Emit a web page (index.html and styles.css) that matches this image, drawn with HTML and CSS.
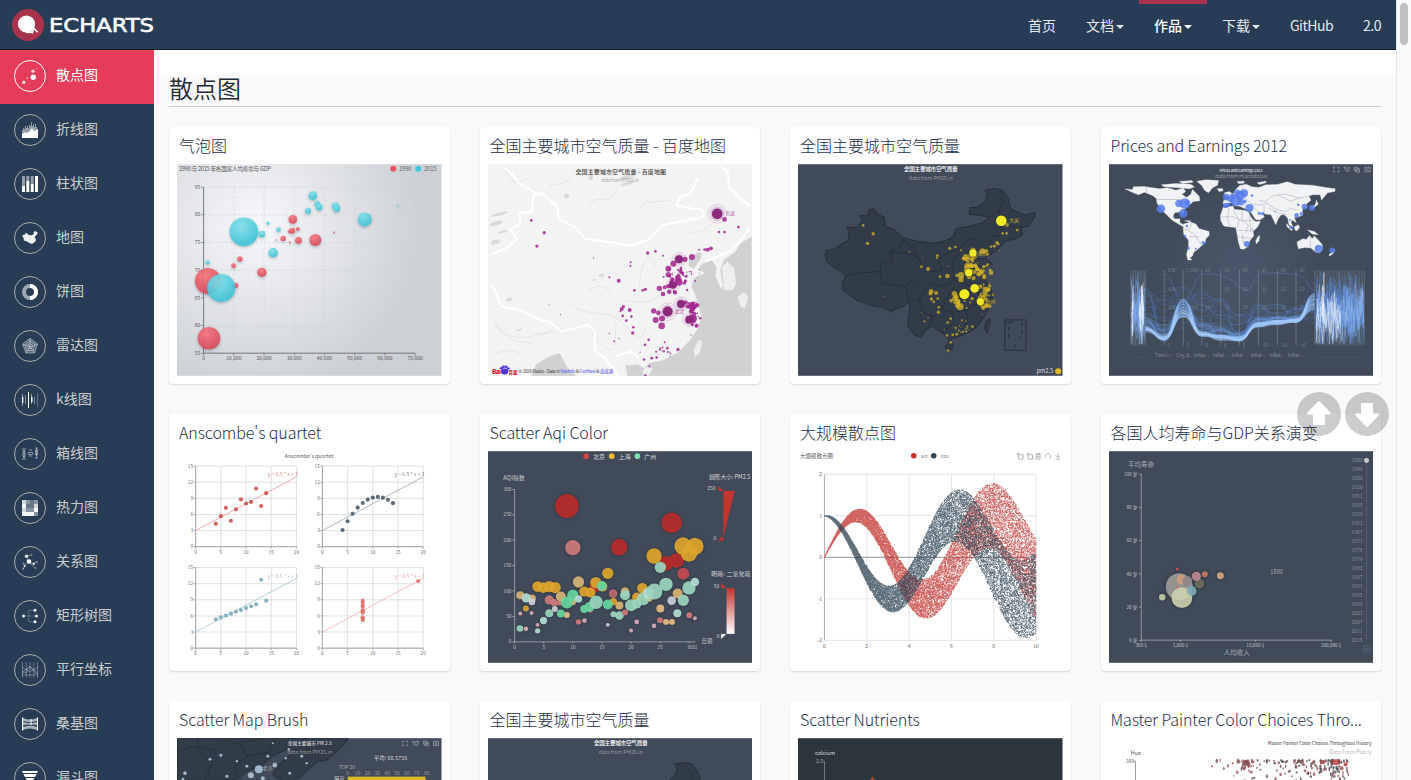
FILE: index.html
```html
<!DOCTYPE html>
<html lang="zh">
<head>
<meta charset="utf-8">
<title>ECharts</title>
<link rel="stylesheet" href="styles.css">
</head>
<body>
<div class="shell">
  <div class="page">
    <header class="topbar">
      <a class="logo">
        <svg width="150" height="36" viewBox="0 0 150 36">
          <circle cx="18" cy="18" r="16" fill="#a9334c"/>
          <circle cx="16.5" cy="17" r="8.6" fill="#fff"/>
          <path d="M20 20l2.500 5 1.200-4 4 4.200" fill="none" stroke="#fff" stroke-width="1.600"/>
          <path d="M16 25.300h6" stroke="#fff" stroke-width="1.600"/>
          <text class="wordmark" x="39" y="25" textLength="105" lengthAdjust="spacingAndGlyphs">ECHARTS</text>
        </svg>
      </a>
      <nav class="nav">
        <a>首页</a>
        <a>文档<i class="caret"></i></a>
        <a class="current">作品<i class="caret"></i></a>
        <a>下载<i class="caret"></i></a>
        <a class="latin">GitHub</a>
        <a class="latin">2.0</a>
      </nav>
    </header>
    <div class="body">
      <aside class="side">
        <a class="item active"><span class="ring"><svg viewBox="0 0 16 16"><circle cx="1.700" cy="14.300" r="1.600"/><circle cx="11.300" cy="9.300" r="2.700"/><circle cx="5.300" cy="10.300" r="1" opacity=".5"/><circle cx="11" cy="3.200" r="1.700" opacity=".75"/><circle cx="15" cy=".8" r=".7" opacity=".5"/></svg></span><span>散点图</span></a>
        <a class="item"><span class="ring"><svg viewBox="0 0 16 16"><path opacity=".5" d="M0 8h1V6h1v1h1V4h1v2h1V4h1v2h1V3h1v1h1V0h1v4h1V2h1v3h1V2h1v3h1v2h1v9H0z"/><path d="M0 12l3-2 1 1 3-1 3-4 1 2 2 1 3-2v9H0z"/></svg></span><span>折线图</span></a>
        <a class="item"><span class="ring"><svg viewBox="0 0 16 16"><path opacity=".5" d="M0 0h3v11H0zM4.300 0h3v5h-3zM8.700 0h3v8h-3z"/><path d="M0 10h3v6H0zM4.300 5h3v11h-3zM8.700 8h3v8h-3zM13 0h3v16h-3z"/></svg></span><span>柱状图</span></a>
        <a class="item"><span class="ring"><svg viewBox="0 0 16 16"><path d="M0 5.500l3-1 1-2 2 2 3 1 3-1.500-.5-2L13.500 1l2.500 2-2 2.500-1.500 2 1.500 1.500-.5 2.500-3.500 2.500-2.500-1-2.500-1.500-3-1L1.500 8z" opacity=".93"/></svg></span><span>地图</span></a>
        <a class="item"><span class="ring"><svg viewBox="0 0 16 16"><circle cx="8" cy="8" r="6" fill="none" stroke="#fff" stroke-width="4" opacity=".55"/><path d="M8 2a6 6 0 0 1 0 12" fill="none" stroke="#fff" stroke-width="4"/></svg></span><span>饼图</span></a>
        <a class="item"><span class="ring"><svg class="line" viewBox="0 0 16 16"><path d="M8 .5l7.500 5.500-3 9h-8.500L.5 6z" fill="#fff" fill-opacity=".3"/><path d="M8 3l5 3.500-2 6H5L3 7zM8 5.500l2.500 2-1 3H6.500l-1-3zM8 .5v8l7.500-2.500M8 8.500l4.500 6.500M8 8.500L4 15M8 8.500L.5 6"/></svg></span><span>雷达图</span></a>
        <a class="item"><span class="ring"><svg viewBox="0 0 16 16"><path d="M.3 2h.5v12H.3zM0 5h1.300v6H0zM6 0h1v16H6zM9.500 2h.5v10h-.5zM9 5h1.500v5H9z"/><path opacity=".4" d="M3 3h1v9H3zM12 5h1v7h-1zM15 1h.7v14H15z"/></svg></span><span>k线图</span></a>
        <a class="item"><span class="ring"><svg class="line" viewBox="0 0 16 16"><path d="M0 3h4M2 3v10M0 13h4M1 5.500h2v5H1zM13 2h3M14.500 2v10M13 12h3M13.500 4h2v5h-2zM7 4h3M6.500 6.500h4v2h-4zM7 10h3"/></svg></span><span>箱线图</span></a>
        <a class="item"><span class="ring"><svg viewBox="0 0 16 16" shape-rendering="crispEdges"><path opacity=".8" d="M0 0h4v4H0zM0 8h4v4H0zM12 4h4v4h-4z"/><path opacity=".45" d="M4 0h4v4H4zM12 0h4v4h-4zM4 8h8v4H4zM12 12h4v4h-4z"/><path opacity=".3" d="M8 0h4v8H8zM4 4h4v4H4z"/><path d="M0 4h4v4H0zM0 12h12v4H0zM12 8h4v4h-4z" opacity=".95"/></svg></span><span>热力图</span></a>
        <a class="item"><span class="ring"><svg viewBox="0 0 16 16"><path d="M4.500 2L7 7.500l4 2.300 4-2M4.500 2l5-1M7 7.500L2.500 12 1 15M7 7.500l5 6M2 9.500l1 3" stroke="#fff" stroke-width=".7" fill="none" opacity=".5"/><circle cx="4.500" cy="2.300" r="1.800" opacity=".8"/><circle cx="7" cy="7.500" r="2.300"/><circle cx="11.800" cy="9.800" r="1.400" opacity=".7"/><circle cx="2.700" cy="12" r="1.100" opacity=".7"/><g opacity=".45"><circle cx="9.700" cy=".9" r=".8"/><circle cx="15" cy="8" r=".9"/><circle cx="1.200" cy="15" r=".9"/><circle cx="13.500" cy="14" r=".9"/><circle cx="1.500" cy="9.500" r=".9"/></g></svg></span><span>关系图</span></a>
        <a class="item"><span class="ring"><svg viewBox="0 0 16 16"><path d="M1 8h14M7 2.300h6M7 13.700h6M6.700 2v12" stroke="#fff" stroke-width=".6" fill="none" opacity=".4"/><circle cx="1.500" cy="8" r="1.500"/><circle cx="13" cy="2.300" r="1.500"/><circle cx="14.500" cy="8" r="1.500"/><circle cx="13" cy="13.700" r="1.500"/></svg></span><span>矩形树图</span></a>
        <a class="item"><span class="ring"><svg class="line faint" viewBox="0 0 16 16"><path d="M.5 0v16M4.300 0v16M8 0v16M11.800 0v16M15.500 0v16M0 5l4 3 4-4 4 4 4-3M0 12l4-5 4 3 4-3 4 5M0 9l4 2 4-6 4 5 4 2M0 13h16"/></svg></span><span>平行坐标</span></a>
        <a class="item"><span class="ring"><svg viewBox="0 0 16 16"><path d="M0 1.500h1.200v13H0zM15 1.500h1v13h-1zM8.500 3h1v6h-1z"/><path opacity=".6" d="M1 2q7 3 14 0v3q-7 2-14 0zM1 6q7 2 14 0v3q-7-1-14 0zM1 11q7-3 14 0v3q-7-3-14 0z"/></svg></span><span>桑基图</span></a>
        <a class="item"><span class="ring"><svg viewBox="0 0 16 16"><path d="M0 1h16l-1 2H1zM1.500 4h13l-1.500 3H3zM3.700 8h8.600l-1.500 3H5.200zM6 12h4l-2 4z"/></svg></span><span>漏斗图</span></a>
      </aside>
      <main class="content">
        <h1>散点图</h1>
        <div class="grid">
          <section class="card"><h2>气泡图</h2><svg class="thumb" id="bubble" viewBox="36 132 795 636"></svg></section>
          <section class="card"><h2>全国主要城市空气质量 - 百度地图</h2><svg class="thumb" id="bmap" viewBox="36 132 795 636"></svg></section>
          <section class="card"><h2>全国主要城市空气质量</h2><svg class="thumb" id="china" viewBox="36 132 795 636"></svg></section>
          <section class="card"><h2 class="latin-title">Prices and Earnings 2012</h2><svg class="thumb" id="prices" viewBox="39 132 795 636"></svg></section>
          <section class="card"><h2 class="latin-title">Anscombe's quartet</h2><svg class="thumb" id="anscombe" viewBox="36 123 795 636"></svg></section>
          <section class="card"><h2 class="latin-title">Scatter Aqi Color</h2><svg class="thumb" id="aqi" viewBox="36 123 795 636"></svg></section>
          <section class="card"><h2>大规模散点图</h2><svg class="thumb" id="large" viewBox="0 0 265 212"></svg></section>
          <section class="card"><h2>各国人均寿命与GDP关系演变</h2><svg class="thumb" id="gdp" viewBox="0 0 265 212"></svg></section>
          <section class="card"><h2 class="latin-title">Scatter Map Brush</h2><svg class="thumb" id="brush" viewBox="0 0 265 212"></svg></section>
          <section class="card"><h2>全国主要城市空气质量</h2><svg class="thumb" id="china2" viewBox="36 132 795 636"></svg></section>
          <section class="card"><h2 class="latin-title">Scatter Nutrients</h2><svg class="thumb" id="nutrients" viewBox="0 0 265 212"></svg></section>
          <section class="card"><h2 class="latin-title">Master Painter Color Choices Thro...</h2><svg class="thumb" id="painter" viewBox="0 0 265 212"></svg></section>
        </div>
      </main>
    </div>
  </div>
  <div class="scrollbar"><div class="grip"></div></div>
</div>
<div class="jump">
  <svg viewBox="0 0 44 44"><circle cx="22" cy="22" r="22" fill="#000" fill-opacity=".2"/><path d="M22 10L33 21.500H27V32H17V21.500H11z" fill="#fff" stroke="#fff" stroke-width="2" stroke-linejoin="round"/></svg>
  <svg viewBox="0 0 44 44"><circle cx="22" cy="22" r="22" fill="#000" fill-opacity=".2"/><path d="M22 34L33 22.500H27V12H17V22.500H11z" fill="#fff" stroke="#fff" stroke-width="2" stroke-linejoin="round"/></svg>
</div>
<script src="charts.js"></script>
</body>
</html>
```
FILE: styles.css
```css
* { box-sizing: border-box; }
body {
  margin: 0;
  height: 780px;
  overflow: hidden;
  background: #fff;
  font-family: "Noto Sans CJK SC", "Noto Sans", sans-serif;
  font-size: 14px;
  color: #293c55;
}
.shell { display: flex; height: 780px; }
.page { flex: 1; min-width: 0; display: flex; flex-direction: column; }
.topbar {
  height: 50px;
  flex: none;
  display: flex;
  justify-content: space-between;
  background: #293c55;
  border-bottom: 1px solid #101c2c;
}
.logo { padding: 7px 0 0 10px; }
.logo svg { display: block; }
.wordmark {
  font-family: "DejaVu Sans", sans-serif;
  font-size: 19px;
  fill: #fff;
  stroke: #fff;
  stroke-width: .6px;
}
.nav { display: flex; }
.nav a {
  height: 49px;
  padding: 11px 15px 0;
  line-height: 20px;
  border-top: 4px solid transparent;
  color: #e6e9ed;
  white-space: nowrap;
}
.nav .latin { letter-spacing: -.5px; }
.nav .current { border-top-color: #a9334c; color: #fff; font-weight: 500; }
.caret {
  display: inline-block;
  margin-left: 2px;
  vertical-align: middle;
  border: 4px solid transparent;
  border-top-color: currentColor;
  border-bottom: 0;
}
.body { flex: 1; min-height: 0; display: flex; }
.side { width: 154px; flex: none; background: #293c55; overflow: hidden; }
.item {
  display: flex;
  align-items: flex-start;
  gap: 10px;
  height: 54px;
  padding: 10px 0 0 14px;
  line-height: 28px;
  color: #ccc;
}
.item.active { background: #e43c59; color: #fff; }
.ring {
  width: 32px;
  height: 32px;
  border: 1px solid #a9aaa9;
  border-radius: 50%;
  display: grid;
  place-items: center;
}
.active .ring { border-color: #fff; }
.ring svg { width: 16px; height: 16px; fill: #fff; overflow: visible; }
.ring .line { fill: none; stroke: #fff; stroke-width: .6px; opacity: .75; }
.ring .faint { stroke-width: .5px; opacity: .6; }
.content {
  flex: 1;
  min-width: 0;
  overflow: hidden;
  margin-top: 25px;
  padding: 0 15px;
  background-color: #fbfbfb;
  background-image: repeating-linear-gradient(0deg, rgba(0,0,0,.008) 0 1px, transparent 1px 2px), repeating-linear-gradient(90deg, rgba(0,0,0,.008) 0 1px, transparent 1px 2px);
}
h1 {
  margin: 0 0 20px;
  height: 32px;
  line-height: 26px;
  font-size: 24px;
  font-weight: 350;
  color: #222b36;
  border-bottom: 1px solid #ccc;
}
.grid { display: grid; grid-template-columns: repeat(4, minmax(0, 1fr)); gap: 30px; }
.card {
  height: 257px;
  padding: 7px 8px 8px;
  background: #fff;
  border-radius: 4px;
  box-shadow: 0 1px 2px rgba(0,0,0,.14);
}
h2 {
  margin: 0 0 6px;
  padding: 0 2px;
  height: 24px;
  line-height: 22px;
  font-size: 16px;
  font-weight: 300;
  color: #1d2f48;
  white-space: nowrap;
}
.latin-title { letter-spacing: -.09px; }
.thumb { display: block; width: 100%; height: 212px; }
.scrollbar { width: 15px; background: #fafafa; border-left: 1px solid #e7e7e7; padding: 3px 0 0 3px; }
.grip { width: 8px; height: 42px; border-radius: 4px; background: #c1c1c1; }
.jump { position: fixed; left: 1297px; top: 392px; display: flex; gap: 4px; }
.jump svg { width: 44px; height: 44px; display: block; }
```
FILE: charts.js
```js
let seed = 7;
const rnd = () => (seed = (seed * 16807) % 2147483647) / 2147483647;
const gauss = () => rnd() + rnd() + rnd() - 1.5;
const put = (id, s) => { document.getElementById(id).innerHTML = s; };
const rect = (x, y, w, h, f, extra = '') => `<rect x="${x}" y="${y}" width="${w}" height="${h}" fill="${f}" ${extra}/>`;
const dot = (x, y, r, f, o = 1) => `<circle cx="${x}" cy="${y}" r="${r}" fill="${f}" fill-opacity="${o}"/>`;
const path = (d, stroke, w = 1, fill = 'none', extra = '') => `<path d="${d}" stroke="${stroke}" stroke-width="${w}" fill="${fill}" stroke-linejoin="round" ${extra}/>`;
const text = (x, y, s, size, f, a = 'middle', extra = '') => `<text x="${x}" y="${y}" font-size="${size}" fill="${f}" text-anchor="${a}" ${extra}>${s}</text>`;
const poly = p => 'M' + p + 'z';

/* bubble chart: life expectancy against GDP */
{
  let s = `<defs><radialGradient id="bg1" gradientUnits="userSpaceOnUse" cx="275" cy="320" r="500"><stop offset="0" stop-color="#f7f8fa"/><stop offset="1" stop-color="#cdd0d5"/></radialGradient>
  <radialGradient id="rd" cx=".4" cy=".3" r="1"><stop offset="0" stop-color="#fb767b"/><stop offset="1" stop-color="#cc2e48"/></radialGradient>
  <radialGradient id="bl" cx=".4" cy=".3" r="1"><stop offset="0" stop-color="#81e3ee"/><stop offset="1" stop-color="#19b7cf"/></radialGradient>
  <filter id="sh" x="-30%" y="-30%" width="160%" height="170%"><feDropShadow dx="0" dy="4" stdDeviation="4" flood-color="#356" flood-opacity=".45"/></filter></defs>`;
  s += rect(36, 132, 795, 636, 'url(#bg1)');
  for (let i = 0; i < 8; i++) {
    const x = 116 + i * 90.8;
    if (i) s += path(`M${x} 201V700`, '#cfd1d5', 2, 'none', 'stroke-dasharray="7 6"');
    s += path(`M${x} 700v7`, '#667', 2) + text(x, 722, i ? i + '0,000' : '0', 15, '#555');
  }
  [85, 80, 75, 70, 65, 60, 55].forEach((v, i) => {
    const y = 201 + i * 83.2;
    s += path(`M116 ${y}H752`, '#cfd1d5', 2, 'none', 'stroke-dasharray="7 6"') + path(`M108 ${y}h8`, '#667', 2) + text(106, y + 5, v, 15, '#555', 'end');
  });
  s += path('M116 201V700H752', '#60646a', 2.5);
  s += text(42, 152, '1990 与 2015 年各国家人均寿命与 GDP', 17, '#555', 'start', 'textLength="276"');
  s += dot(686, 146, 9, '#e8515f') + text(722, 152, '1990', 17, '#666') + dot(761, 146, 9, '#45c8dc') + text(797, 152, '2015', 17, '#666');
  const red = [[129,483,39],[132,655,34],[206,437,7],[225,417,8],[212,496,8],[291,457,14],[384,298,13],[382,332,9],[399,327,6],[355,355,8],[401,361,10],[452,360,18],[334,360,2.5],[375,367,3],[508,337,3],[374,334,5]];
  const blue = [[237,335,43],[169,504,42],[291,342,10],[341,328,7],[309,309,5],[325,398,14],[128,427,6],[444,226,13],[430,272,9],[457,250,8],[463,261,10],[512,257,10],[516,265,10],[600,298,21],[700,257,3]];
  const g = (a, f) => `<g filter="url(#sh)">` + a.map(d => dot(...d, `url(#${f})`, .85)).join('') + '</g>';
  put('bubble', s + g(red, 'rd') + g(blue, 'bl'));
}

const chinaShape = poly('117 405 120 392 150 385 165 372 187 362 190 340 183 322 215 322 228 300 222 285 245 288 250 268 265 266 275 282 296 292 298 318 325 328 350 352 385 362 440 370 470 365 500 352 512 325 545 320 590 308 610 292 585 286 550 283 552 262 575 262 598 245 605 222 598 210 628 205 650 210 668 235 675 265 700 278 720 285 750 277 745 295 730 318 708 322 710 345 690 357 660 362 640 385 620 400 600 410 598 402 612 390 590 385 565 400 560 412 580 415 600 415 622 432 600 442 590 460 600 480 618 510 620 540 612 560 595 590 580 615 555 635 520 650 500 655 492 668 484 652 470 640 440 620 425 625 405 652 385 645 365 615 370 580 372 545 350 560 315 575 290 562 255 557 210 540 170 510 168 490 180 470 165 455 140 440 122 425');
const provinces = 'M175 467L230 458 285 455 284 430 318 422 312 398 345 380 352 352M284 455L288 490 330 495 362 500 375 480 395 495M312 398L360 398 395 410 380 382 352 360M395 410L410 440 440 455 470 450 458 420 480 400 520 388 540 362 570 355 590 372M362 500L368 545 400 535 420 505 440 490 470 500 505 480 500 430 520 395M400 535L410 575 440 590 470 570 480 540 505 500M440 590L430 622M470 570L500 575 505 605 470 640M500 575L540 572 575 550 600 545M540 572L548 600 520 640M575 550L580 520 560 500 530 490 505 480M530 490L540 455 560 440 598 442M540 455L535 410 550 395M610 292L640 270 655 245 635 220M640 270L650 310 690 320 708 322M645 310L650 345 620 350 610 375';
const coords = [[232,316,4],[262,341,5],[245,370,5],[371,396,2],[407,440,4],[427,447,6],[412,412,1.5],[455,407,4],[453,414,3],[492,385,5],[509,381,4],[526,391,3],[463,470,4],[485,468,7],[488,439,2],[436,514,7],[434,521,6],[451,519,6],[437,537,5],[444,546,4],[456,536,4],[459,562,4],[458,577,5],[416,604,3],[427,594,2],[407,578,1.5],[297,530,1.5],[495,596,4],[486,608,4],[475,629,2],[484,647,4],[495,668,4],[487,692,4],[501,645,4],[513,643,4],[529,601,3],[560,620,4],[589,584,2],[541,604,2],[651,340,4],[663,340,4],[695,330,4],[664,314,6],[634,368,5],[626,378,5],[616,380,4],[603,392,5],[591,394,9],[605,402,5],[559,536,5],[553,548,3],[543,564,3],[638,372,4],[641,391,2],[523,560,11],[515,545,9],[506,521,8],[526,466,10],[514,466,5],[526,479,8]];
const spread = (cx, cy, sx, sy, n, r) => Array.from({ length: n }, () => [cx + gauss() * sx, cy + gauss() * sy, r * (.4 + rnd())]);
const clusters = [...spread(550, 425, 16, 40, 22, 6), ...spread(575, 448, 34, 26, 32, 5), ...spread(597, 508, 24, 18, 20, 5), ...spread(594, 543, 18, 20, 14, 6), ...spread(518, 538, 18, 18, 10, 6), ...spread(528, 627, 24, 12, 18, 2.5)];

/* national air quality, dark map */
function chinaMap() {
  let s = rect(36, 132, 795, 636, '#404a59') + path(chinaShape, '#222c34', 2.5, '#323c48') + path(provinces, '#222c34', 2.2);
  s += path('M596 625l6-22 12-7-3 22-7 23z', '#222c34', 2, '#323c48') + path('M478 680l10-13 14 5-2 16-14 8z', '#222c34', 2, '#323c48');
  s += path('M658 600h63v91h-63z', '#222c34', 2.5) + path('M658 610l20-3 8-7M670 620v12M670 642v14M710 608v12M709 630v12M703 650l-3 8M685 680l8-6', '#222c34', 3);
  s += text(435, 151, '全国主要城市空气质量', 17, '#fff', 'middle', 'textLength="162" font-weight="500"') + text(435, 179, 'data from PM25.in', 16, '#999', 'middle', 'textLength="132"');
  return s;
}
{
  let s = chinaMap();
  coords.concat(clusters).forEach(([x, y, r]) => { s += dot(x, y, r, '#ddb926', .72); });
  s += text(670, 306, '大庆', 15, '#ddb926', 'start') + text(575, 404, '北京', 15, '#ddb926', 'start') + text(600, 549, '杭州', 15, '#ddb926', 'start');
  s += `<g style="filter:drop-shadow(0 0 4px #333)">` + [[647,302,16],[562,399,11],[549,458,11],[567,505,13],[536,523,15],[584,545,11]].map(d => dot(...d, '#f4e925')).join('') + '</g>';
  s += text(778, 760, 'pm2.5', 17, '#ddd') + dot(818, 754, 9, '#ddb926');
  put('china', s);
  put('china2', chinaMap());
}

/* the same cities on a light base map */
{
  const big = [[725,281,16],[610,418,12],[592,495,11],[616,552,12],[576,575,15],[640,600,11]];
  let s = rect(36, 132, 795, 636, '#f3f3f3');
  s += path(poly('828 350 795 370 780 395 745 420 735 450 742 500 735 505 720 470 722 440 705 418 680 432 668 450 690 458 655 475 648 498 665 540 678 590 668 625 640 665 605 700 560 722 520 730 505 745 485 735 450 738 455 768 828 768'), '#d1d1d1', 1, '#d1d1d1');
  s += path(poly('168 768 180 735 210 715 250 700 262 720 275 745 300 768'), '#d1d1d1', 1, '#d1d1d1');
  s += path(poly('655 445 640 440 640 420 665 398 680 400 672 420'), '#d1d1d1', 1, '#d1d1d1');
  s += path(poly('740 440 755 425 775 445 782 490 772 510 745 510'), '#eee', 1, '#eee') + path(poly('787 530 805 518 818 530 808 565 795 560'), '#eee', 1, '#eee') + path(poly('655 690 670 660 680 665 672 700 658 712'), '#eee', 1, '#eee') + path(poly('500 755 510 742 530 745 522 765 505 768'), '#eee', 1, '#eee');
  const blotches = [[70,282,26,4],[60,310,22,6],[58,366,14,7],[80,335,15,4],[272,228,8,7],[345,170,7,10],[455,170,25,6],[455,190,22,5],[377,467,8,5],[100,538,10,5],[220,555,5,3],[355,480,5,3],[130,630,10,3]];
  blotches.forEach(([x, y, a, b]) => { s += `<ellipse cx="${x}" cy="${y}" rx="${a}" ry="${b}" fill="#d8d9da" transform="rotate(-15 ${x} ${y})"/>`; });
  s += path('M92 135q-5 30 15 45t60-15M336 249q25-15 50-12t35-25 45-15M492 270q8-25 35-25t60-5M335 510q50-25 70 10M490 500q5-60 20-80t30 20M450 540q60 20 100-10t80 15M280 550q40 30 90 30t90 50 50-10M50 590q10 50 60 60t120-20M60 610q30 60 110 60M350 640q30 50 60 50M60 700q50-20 90 10M640 340q50 0 80-40t70-20M290 165q-20 30-70 30M180 640q60 5 90-20M420 610v70', '#e0e2e3', 2.5);
  s += path('M47 403q50-20 57-30l20-15-20-30 28-16v-35h35l5-50 26-8 45 38 5 40 50 25 30 35 80 10 50 10 55-15 45-45 20-5 75-15q45-5 25-30h-20l-55-12 10-25 30-10 25-45M736 140q30 10 22 60l30 30 35 28M80 140q20 10 50 50l65 37M820 320q-15 40-60 75-50 20-70 30M47 490l30 70 55 10q50 30 85 35l40 30 80-20 20 20v60l25 15 35 40 10 25M420 710l45-15 25 20', '#fff', 6);
  const spots = [[166,301,4],[205,338,5],[183,378,5],[353,414,2],[401,472,3],[429,482,6],[465,427,3],[464,438,3],[516,399,5],[539,394,4],[562,407,3],[476,511,4],[509,508,5],[501,511,4],[443,560,5],[438,567,6],[462,570,6],[434,574,3],[441,588,4],[452,602,4],[467,590,4],[473,622,4],[471,639,5],[415,664,3],[430,656,2],[401,640,2],[254,584,2],[519,660,4],[508,675,4],[493,697,2],[505,719,4],[521,739,3],[509,767,4],[528,715,4],[543,713,4],[567,667,3],[575,685,4],[607,689,5],[646,645,2],[730,336,4],[747,336,4],[789,321,4],[747,298,7],[706,385,6],[696,389,6],[687,389,4],[671,389,3],[649,411,9],[628,418,8],[558,618,10],[540,600,9],[534,573,8],[548,579,7],[559,596,9],[551,505,8],[562,522,7],[567,502,6],[593,431,9],[578,446,9],[578,464,8],[655,595,9],[655,582,7],[663,617,6]];
  spots.concat(spread(605, 478, 32, 32, 40, 5), spread(648, 560, 22, 16, 22, 5), spread(652, 600, 18, 18, 12, 5), spread(568, 695, 28, 12, 16, 2.5), spread(650, 465, 30, 14, 10, 2.5)).forEach(([x, y, r]) => { s += dot(x, y, r, '#a2258f', .85); });
  big.forEach(([x, y, r]) => { s += dot(x, y, r * 1.4, '#800080', .18) + `<circle cx="${x}" cy="${y}" r="${r * 1.75}" fill="none" stroke="#a03a93" stroke-opacity=".35" stroke-width="2"/>` + dot(x, y, r, '#8b2a7c'); });
  s += text(750, 286, '大庆', 14, '#b040a0', 'start') + text(598, 580, '武汉', 14, '#b040a0', 'start');
  s += text(435, 162, '全国主要城市空气质量 - 百度地图', 18, '#444', 'middle', 'textLength="272" font-weight="500"') + text(433, 187, 'data from PM25.in', 15, '#aaa', 'middle', 'textLength="112"');
  s += text(48, 763, 'Bai', 19, '#e2202d', 'start', 'font-weight="900" textLength="27"') + text(98, 763, '百度', 13, '#e2202d', 'start', 'font-weight="900"');
  s += `<ellipse cx="86" cy="755" rx="11" ry="9" fill="#4b35df"/>` + dot(77, 745, 4, '#4b35df') + dot(83, 741, 4, '#4b35df') + dot(91, 741, 4, '#4b35df') + dot(97, 746, 4, '#4b35df');
  s += `<text x="128" y="761" font-size="14" fill="#444" textLength="284">© 2016 Baidu - Data © <tspan fill="#55e">NavInfo</tspan> &amp; <tspan fill="#55e">CenNavi</tspan> &amp; <tspan fill="#55e">道道通</tspan></text>`;
  put('bmap', s);
}

/* world map over parallel axes */
{
  let s = `<defs><radialGradient id="bg4" gradientUnits="userSpaceOnUse" cx="435" cy="450" r="260"><stop offset="0" stop-color="#4b5769"/><stop offset="1" stop-color="#404a59"/></radialGradient></defs>` + rect(39, 132, 795, 636, 'url(#bg4)');
  const land = [
    '87 206 110 209 112 200 145 199 190 206 215 203 240 210 262 204 270 214 258 222 272 232 285 222 290 208 310 228 312 242 292 244 284 252 272 262 262 270 262 284 254 276 238 277 232 286 236 297 252 296 252 308 268 316 262 320 228 300 210 282 200 272 192 262 183 248 182 236 170 226 145 216 128 224 112 218',
    '264 312 284 306 300 312 310 326 340 334 340 346 330 356 328 368 316 378 306 388 294 396 290 408 282 414 288 420 276 420 272 404 278 380 278 360 264 345 262 328',
    '303 183 330 179 368 181 365 195 350 203 338 218 326 210 318 196',
    '382 262 412 258 416 268 440 270 458 274 466 292 478 304 494 304 486 320 472 334 474 348 462 362 456 380 444 388 434 386 428 366 424 342 420 322 398 320 384 318 375 302 374 286',
    '382 250 384 240 398 236 394 226 388 228 386 218 400 214 412 222 420 208 432 196 452 192 468 200 490 202 510 194 545 193 575 185 600 193 650 195 690 202 719 206 718 214 696 218 684 232 678 240 674 224 650 224 640 228 646 240 632 252 634 264 624 262 620 272 622 284 610 290 596 292 602 308 590 300 586 306 592 322 580 314 576 294 566 284 556 284 548 296 540 314 534 300 526 284 510 282 500 278 506 290 492 300 480 298 468 280 460 270 444 264 430 258 416 256 412 246 396 250 390 258',
    '604 366 622 356 632 358 642 346 650 356 656 348 668 360 680 374 680 390 672 398 660 396 646 384 628 382 608 386',
    '486 350 492 346 490 362 482 372 480 362', '572 310 590 328 588 332 574 320', '596 320 608 314 612 322 604 332 598 330', '636 330 656 334 668 344 650 342', '700 404 718 390 714 400 702 408', '662 240 668 252 656 262 648 264 660 252',
    '196 194 240 190 284 192 296 200 282 206 240 202 205 200', '250 184 288 181 292 186 260 190', '364 206 380 205 382 212 370 214', '424 184 446 183 444 189 428 190', '484 188 510 183 512 187 492 193', '266 302 284 302 282 306'];
  land.forEach(p => { s += path(poly(p), '#f1f2f3', 1, '#f1f2f3'); });
  s += path('M183 238H258M150 201l5 20M400 262l-5 35 8 22M412 270l18 30-5 22M440 270l-2 30 20 15-8 25M378 290h35l25 12 40-2M424 330l50 3M428 350l40 5M440 340l3 30M460 275l5 60M275 330l20 12 20 30M280 350l30 0M262 330l20-5 5-16M440 200l5 30 20 20 20 5 30-5 20 15 30 10 20-10 20 5M490 240l20 5 20-18 40-5 40 12 40-8M548 225l35 18 30-10M470 255l20 25M505 255v25M420 225l30 15-6 20M520 265l25 12 30 8M644 347v38', '#7c838d', 1);
  [[195,266,13],[249,250,11],[267,250,16],[275,248,8],[262,280,13],[234,291,3],[273,318,4],[267,348,4],[278,385,4],[300,386,3],[322,368,5],[329,367,3],[391,231,10],[390,256,8],[398,254,6],[419,240,17],[424,217,9],[445,219,12],[434,226,14],[404,236,10],[435,246,10],[410,228,8],[448,244,5],[461,264,12],[469,226,4],[491,280,5],[501,281,5],[538,275,2],[453,372,9],[586,322,5],[603,286,7],[617,281,5],[627,260,9],[649,263,9],[608,254,4],[669,386,12],[710,391,9],[583,300,3],[471,327,2]].forEach(d => { s += dot(...d, '#577ceb', .85); });
  s += text(436, 154, 'Prices and Earnings 2012', 11, '#eee', 'middle', 'textLength="130" lengthAdjust="spacingAndGlyphs" font-weight="500"') + text(436, 174, 'data from macrofocus', 16, '#999', 'middle', 'textLength="158"');
  const tools = (x, y) => path(`M${x} ${y}h5m6 0h5v5m0 4v5h-5m-6 0h-5v-5m0-4v-5M${x + 31} ${y}h6l3 5 4-5h4l-3 12h-6zM${x + 62} ${y}h11v10h-11zM${x + 67} ${y + 5}h11v10h-11zM${x + 94} ${y}h16v14h-16zm4 3l8 8m0-8l-8 8`, '#b3b8bf', 1.8);
  s += tools(714, 141);
  const ax = [148, 205, 262, 318, 375, 431, 488, 545, 601, 657];
  ax.slice(1, 9).forEach((x, i) => {
    s += path(`M${x} 450V677`, '#8b929c', 2, 'none', 'opacity=".8"');
    const v = [[500, 400, 300, 0], ['1,500', '', '1,000', 0], [15, '', 10, 0], [20, 15, 10, 0], [40, 30, 20, 0], [60, 20, 10, -10], [60, 20, 10, -10], [30, 20, 10, -10]][i];
    [456, 512, 568, 682].forEach((y, k) => { s += text(x + 10, y, v[k], 14, '#8a909a', 'start', 'opacity=".7"'); });
    s += text(x, 712, i ? (i == 1 ? 'City, b.' : 'Inflat…') : 'Time r…', 14, '#8a909a');
  });
  s += path('M103 712H150M657 712H808', '#59636f', 1);
  let lines = '';
  const curve = ys => {
    let d = `M${ax[0]} ${ys[0]}`;
    for (let j = 1; j < ax.length; j++) {
      const m = (ax[j] + ax[j - 1]) / 2;
      d += `C${m} ${ys[j - 1]} ${m} ${ys[j]} ${ax[j]} ${ys[j]}`;
    }
    return d;
  };
  const mean = [632, 659, 565, 648, 655, 659, 615, 608, 603, 545];
  const reach = [140, 150, 75, 150, 140, 80, 70, 60, 45, 75];
  /* kind: loose outliers, ordinary cities, and the bright core where most cities meet */
  const bundle = (n, scale, jitter, col, o) => {
    for (let i = 0; i < n; i++) {
      const ys = mean.map((m, j) => {
        const off = j == 2 || j == 9 ? (rnd() - .5) * reach[j] * 1.8 * Math.max(scale, .4) : -rnd() * reach[j] * scale + (rnd() - .4) * jitter;
        return Math.min(674, Math.max(458, m + off)).toFixed(0);
      });
      lines += path(curve(ys), col, 1.7, 'none', `opacity="${o}"`);
    }
  };
  bundle(18, 1, 10, '#5d8de8', .3);
  bundle(36, .3, 16, '#6fa4f5', .3);
  bundle(34, .07, 12, '#a9d0ff', .45);
  lines += path('M205 462C230 462 240 545 262 545S300 462 318 462C350 462 390 460 431 500S470 460 500 460C560 456 570 462 601 463S640 510 657 512', '#6793dd', 2, 'none', 'opacity=".5"');
  for (let x = 104; x < 150; x += 5) lines += path(`M${x} 451V677`, '#8e98a6', 1.5, 'none', 'opacity=".7"');
  for (let x = 657; x < 812; x += 5) lines += path(`M${x} 451V677`, '#8e98a6', 1.5, 'none', 'opacity=".6"');
  const scribble = (x0, x1, n, col, o, amp = 100, mid = 575, step = 5) => {
    for (let i = 0; i < n; i++) {
      let d = '';
      for (let x = x0; x <= x1; x += step) d += (d ? 'L' : 'M') + x + ' ' + Math.min(672, Math.max(456, mid + gauss() * amp)).toFixed(0);
      lines += path(d, col, 1.6, 'none', `opacity="${o}"`);
    }
  };
  scribble(106, 146, 20, '#7fb0ff', .42);
  scribble(108, 113, 7, '#f4fbff', .6, 110, 575, 2);
  scribble(130, 142, 11, '#f4fbff', .65, 110, 575, 4);
  scribble(660, 806, 20, '#5f98f5', .42);
  scribble(740, 806, 6, '#b9dcff', .35);
  scribble(662, 738, 9, '#f0faff', .5, 80, 595);
  scribble(680, 686, 6, '#fff', .55, 110, 570, 2);
  put('prices', s + lines);
}

/* Anscombe's quartet */
{
  const sets = [
    [[10,8.04],[8,6.95],[13,7.58],[9,8.81],[11,8.33],[14,9.96],[6,7.24],[4,4.26],[12,10.84],[7,4.82],[5,5.68]],
    [[10,9.14],[8,8.14],[13,8.74],[9,8.77],[11,9.26],[14,8.1],[6,6.13],[4,3.1],[12,9.13],[7,7.26],[5,4.74]],
    [[10,7.46],[8,6.77],[13,12.74],[9,7.11],[11,7.81],[14,8.84],[6,6.08],[4,5.39],[12,8.15],[7,6.42],[5,5.73]],
    [[8,6.58],[8,5.76],[8,7.71],[8,8.84],[8,8.47],[8,7.04],[8,5.25],[19,12.5],[8,5.56],[8,7.91],[8,6.89]]];
  const cols = ['#cc4b49', '#475766', '#7aa7b8', '#d96f6c'], soft = ['#e9a3a1', '#a7afb8', '#abc9d6', '#efb6b3'];
  let s = rect(36, 123, 795, 636, '#fff') + text(433, 142, "Anscombe's quartet", 15, '#555', 'middle', 'textLength="146"');
  sets.forEach((pts, i) => {
    const x0 = i % 2 ? 473 : 92, y0 = i < 2 ? 410 : 715, X = v => x0 + v * 15.15, Y = v => y0 - v * 16.15;
    for (let v = 0; v <= 20; v += 5) s += path(`M${X(v)} ${Y(0)}V${Y(15)}`, '#d9d9d9', 2.5) + path(`M${X(v)} ${Y(0)}v6`, '#777', 2) + text(X(v), y0 + 21, v, 14, '#666');
    for (let v = 0; v <= 15; v += 3) s += path(`M${X(0)} ${Y(v)}H${X(20)}`, '#d9d9d9', 2.5) + path(`M${X(0)} ${Y(v)}h-6`, '#777', 2) + text(x0 - 8, Y(v) + 5, v, 14, '#666', 'end');
    s += path(`M${x0} ${Y(15)}V${y0}H${X(20)}`, '#9a9a9a', 2.5) + path(`M${x0} ${Y(3)}L${X(20)} ${Y(13)}`, soft[i], 2.7);
    pts.forEach(([x, y]) => { s += dot(X(x), Y(y), 6.2, cols[i], .88); });
    s += text(x0 + 307, Y(13) - 1, 'y = 0.5 * x + 3', 15, cols[i], 'end', 'textLength="90" opacity=".65"');
  });
  put('anscombe', s);
}

/* AQI in three cities */
{
  let s = rect(36, 123, 795, 636, '#404a59');
  [['北京', 331, '#dd4444'], ['上海', 408, '#fec42c'], ['广州', 485, '#80f1be']].forEach(([n, x, c]) => { s += dot(x, 138, 8.5, c, .9) + text(x + 21, 145, n, 18, '#ddd', 'start'); });
  s += text(82, 211, 'AQI指数', 17, '#ccc', 'start', 'textLength="64"') + path('M116 238V696H659', '#b7bcc4', 2);
  for (let i = 0; i <= 6; i++) s += path(`M116 ${238 + i * 76.3}h-7`, '#ccc', 2) + text(106, 243 + i * 76.3, 300 - i * 50, 14, '#ccc', 'end');
  for (let i = 0; i <= 6; i++) s += path(`M${116 + i * 87.5} 696v5`, '#ccc', 2) + text(i == 6 ? 650 : 116 + i * 87.5, 717, i == 6 ? '3031' : i * 5, 14, '#ccc');
  s += text(678, 700, '日期', 16, '#ccc', 'start');
  const R = '#b82c2b', Y = '#dda52d', P = '#ce7b7d', T = '#d8b477', G = '#67d5a0', M = '#9bd5bd', L = '#b5dcd2', W = '#c9cdd7', K = '#daaab6', O = '#e6bc86';
  const b = [[273,288,36,R],[588,338,31,R],[430,412,25,R],[291,413,23,P],[571,460,22,R],[603,452,22,R],[623,491,18,'#c34b51'],[355,533,15,R],[220,570,14,P],[235,578,11,P],[251,579,8,P],[412,551,13,'#b9696c'],[343,600,8,P],
    [133,556,12,T],[168,566,12,T],[150,596,9,Y],[185,530,16,Y],[202,533,16,Y],[220,530,17,Y],[238,533,17,Y],[255,560,15,T],[308,516,17,T],[325,545,15,Y],[344,548,15,Y],[360,518,17,Y],[380,530,15,Y],[396,490,17,Y],[413,575,11,Y],[431,587,12,T],[448,545,13,T],[483,562,14,Y],[500,535,16,Y],[519,562,14,T],[535,438,23,Y],[606,551,15,T],[554,596,12,O],[571,636,9,O],[589,636,9,O],[273,615,9,O],[290,575,11,T],[622,408,26,Y],[640,430,25,Y],[658,409,26,Y],
    [132,656,10,M],[151,564,14,L],[168,576,10,W],[185,663,8,L],[203,632,11,L],[220,610,12,M],[237,597,9,W],[255,611,12,G],[273,578,18,G],[291,556,17,G],[308,567,11,L],[325,597,12,G],[341,591,15,G],[361,577,20,M],[378,528,15,G],[396,584,15,G],[413,613,9,M],[431,617,13,M],[448,556,15,M],[466,586,18,M],[483,582,14,M],[502,567,19,M],[518,550,17,L],[536,545,24,M],[554,472,17,M],[571,523,20,M],[588,572,13,W],[605,610,12,L],[623,571,17,M],[640,534,20,M],[658,516,13,L],
    [133,611,6,K],[167,609,6,K],[150,657,7,K],[185,645,6,K],[308,636,8,P],[326,632,7,K],[396,645,6,W],[448,608,9,P],[466,662,6,K],[483,636,7,K],[535,648,7,K],[553,631,9,P],[641,616,9,P],[658,625,6,K]];
  s += '<g style="filter:drop-shadow(0 0 4px rgba(0,0,0,.35))">' + b.map(([x, y, r, c]) => dot(x, y, r, c, .93)).join('') + '</g>';
  s += text(825, 206, '圆形大小: PM2.5', 17, '#ddd', 'end', 'textLength="124"') + text(720, 240, '250', 15, '#ccc', 'end') + text(722, 391, '0', 15, '#ccc', 'end');
  s += path('M744 243h33l-33 135z', '#c23531', 1, '#c23531') + path('M729 228l14 14h-14zM729 392h14l-2-14z', '#c23531', 1, '#c23531');
  s += `<defs><linearGradient id="br" x2="0" y2="1"><stop stop-color="#c23531"/><stop offset="1" stop-color="#fff"/></linearGradient></defs>` + rect(753, 535, 24, 137, 'url(#br)');
  s += text(825, 499, '明暗: 二氧化硫', 17, '#ddd', 'end', 'textLength="118"') + text(731, 533, '50', 15, '#ccc', 'end') + text(732, 685, '0', 15, '#ccc', 'end') + path('M737 519l14 16h-14z', '#c23531', 1, '#c23531') + path('M737 673h14l-14 14z', '#fff', 1, '#fff');
  put('aqi', s);
}

/* large scatter: sin and cos bands */
{
  let s = rect(0, 0, 265, 212, '#fff');
  const X = v => 26.5 + v * 21.2, Y = v => 106.3 - v * 41.6;
  for (let v = 0; v <= 10; v += 2) s += path(`M${X(v)} ${Y(2)}V${Y(-2)}`, '#ddd', .8) + text(X(v), 197, v, 5, '#666');
  for (let v = -2; v <= 2; v++) s += path(`M${X(0)} ${Y(v)}H${X(10)}`, v ? '#ddd' : '#777', .8) + text(24, Y(v) + 2, v, 5, '#666', 'end');
  s += path(`M${X(0)} ${Y(2)}V${Y(-2)}`, '#999', .7);
  const band = (fn, col) => {
    let d = '';
    for (let i = 0; i < 15000; i++) {
      const x = rnd() * 10, y = fn(x) + x * (i % 2 ? .1 : -.1) * rnd();
      d += `M${(X(x) - .45).toFixed(1)} ${(Y(y) - .45).toFixed(1)}h.9v.9h-.9z`;
    }
    return `<path d="${d}" fill="${col}" fill-opacity=".77"/>`;
  };
  s += band(Math.sin, '#c23531') + band(Math.cos, '#2f4554');
  s += text(2, 7, '大规模散点图', 5.5, '#555', 'start', 'textLength="33"') + dot(116, 4.5, 2.8, '#c23531') + text(123, 6.5, 'sin', 5, '#777', 'start') + dot(136, 4.5, 2.8, '#2f4554') + text(143, 6.5, 'cos', 5, '#777', 'start');
  s += path('M221 3.500h4.500v4.500h-4.500zM220 4v-2h2M230.500 3.500h4.500v4.500h-4.500zM229.500 4v-2h2M239 3h3.500v5h-3.500zM238.500 2.500h4.500M240 4.500v2M241.500 4.500v2M248 6.500a2.700 2.700 0 1 1 3.500 1.200M258 8h5M260.500 2.500v4l-2-2M260.500 6.500l2-2', '#888', .6);
  put('large', s);
}

/* life expectancy and GDP over time */
{
  let s = rect(0, 0, 265, 212, '#404a59') + path('M32.300 23V189.300H222.500', '#b2b6bd', .7);
  for (let i = 0; i <= 5; i++) s += path(`M30 ${23 + i * 33.3}h2.300`, '#ccc', .6) + text(28.5, 24.8 + i * 33.3, (100 - i * 20) + ' 岁', 4.7, '#c2c5ca', 'end');
  [[32.3, '300 $'], [71.5, '1,000 $'], [146.6, '10,000 $'], [222.5, '100,000 $']].forEach(([x, t]) => { s += path(`M${x} 189v2`, '#ccc', .6) + text(x, 196.5, t, 4.7, '#c2c5ca'); });
  s += text(32, 15.5, '平均寿命', 6.5, '#a6abb3') + text(128, 204.5, '人均收入', 6.5, '#a6abb3') + text(168, 123.5, '1800', 5.7, '#a6abb3');
  s += '<g style="filter:drop-shadow(0 0 1.5px rgba(0,0,0,.5))">' + [[70.4,135.7,13.5,'#9ea09c'],[73,146.7,10.5,'#cfd2b0'],[53.3,146.3,3.2,'#c7cfaf'],[72.7,128.5,5,'#d09b79'],[78.5,130,5,'#8d8589'],[82.8,140,5,'#80acb6'],[90.6,132.7,4.8,'#72705d'],[87.5,125.3,4.6,'#c58d95'],[96,123.3,3,'#c9795e'],[111.6,124.7,3.5,'#d9a781'],[68.4,118,1.5,'#cf5964'],[64,131,1.5,'#9b8877'],[68,136,1.5,'#c37474']].map(([x, y, r, c]) => dot(x, y, r, c, .9)).join('') + '</g>';
  const years = [1800, 1840, 1880, 1920, 1951, 1955, 1959, 1963, 1967, 1971, 1975, 1979, 1983, 1987, 1991, 1995, 1999, 2003, 2007, 2011, 2015];
  years.forEach((t, i) => { s += text(254, 11.2 + i * 9.02, t, 5, '#8a919b', 'end'); });
  s += path('M258 9V190', '#59626f', .8) + dot(258, 9.3, 2.5, '#ccc') + `<circle cx="258" cy="198.500" r="3.700" fill="none" stroke="#59626f"/>` + path('M257 197v3M259 197v3', '#59626f', .8);
  put('gdp', s);
}

/* map with brush and ranking bars */
{
  let s = rect(0, 0, 265, 212, '#404a59') + path('M0 0H172L165 9 150 22 140 24 122 40 108 45 96 36 102 26 120 12 112 10 96 18 84 28 72 32 60 42H0z', '#252f38', .9, '#323c48') + path('M0 14l14-6 22 4 10-10 18 4 6 12-12 10 4 12M20 0l2 14 14 10-8 18M70 18l22-4 8-14M125 0l8 14 14 2M66 4l20-4', '#252f38', .9);
  [[44,17,1.5],[33,21,1.5],[91,18,1.5],[82,31,4],[74,37,3],[98,27,2.3],[8,35,1.8],[113,35,1.5],[125,18,1.5],[96,5,1],[109,20,1.2],[112,11,1.2],[50,38,1.5],[60,23,1.2],[130,25,1.2],[70,28,1.5],[86,40,2],[6,41,1.5]].forEach(d => { s += dot(...d, '#afc3d5', .9); });
  s += text(133, 7, '全国主要城市 PM 2.5', 4.6, '#fff', 'middle', 'textLength="44"') + text(133, 15.5, 'data from PM25.in', 5.3, '#999', 'middle', 'textLength="45"') + text(214, 21.5, '平均: 60.5758', 5.2, '#ddd', 'middle', 'textLength="33"');
  s += path('M226 3h1.500m2 0h1.500v1.500m0 1.500v1.500h-1.500m-2 0h-1.500v-1.500m0-1.500v-1.500M236 3h2l1 2 1-2h2l-1 4h-3zM247 3h3.500v3h-3.500zM248.500 4.500h3.500v3h-3.500zM257 3h5v4.500h-5zm1 1l3 3m0-3l-3 3', '#b3b8bf', .6);
  s += text(162, 30.5, 'TOP 20', 5, '#aaa', 'start');
  for (let i = 0; i <= 8; i++) s += text(171 + i * 9.9, 36.5, i * 10, 5, '#999');
  s += rect(171, 38.5, 78, 6, '#ddb926') + text(168, 43, '保定', 5.5, '#ccc', 'end') + text(86, 32, '北京', 5, '#bbb', 'start');
  put('brush', s);
}

/* nutrients */
put('nutrients', rect(0, 0, 265, 212, '#2c343c') + text(27, 16.5, 'calcium', 5.5, '#ddd') + text(25, 25, '2.5', 5, '#aaa', 'end') + path('M24.500 23h2V212', '#999', .7) + path('M72 42l2.500-4 2.500 4z', '#b34a34', 0, '#b34a34'));

/* colours used by painters */
{
  let s = rect(0, 0, 265, 212, '#fff') + text(263, 6.5, 'Master Painter Color Choices Throughout History', 4.8, '#444', 'end', 'textLength="104"') + text(263, 15.5, 'Data From Plot.ly', 5.5, '#bbb', 'end', 'textLength="42"') + text(27, 16.5, 'Hue', 5.5, '#555') + text(25, 25, '360', 5, '#666', 'end') + path('M24.500 23h2V212', '#666', .7);
  for (let i = 0; i < 210; i++) {
    const x = i % 3 ? 92 + Math.sqrt(rnd()) * 148 : (i % 2 ? 137 : 222) + gauss() * 12;
    const y = 22 + rnd() * rnd() * 24;
    s += `<ellipse cx="${x}" cy="${y}" rx="${.6 + rnd() * .8}" ry="${.9 + rnd() * 1.2}" fill="${['#654349', '#8c4b50', '#3f3a46', '#94555a'][i % 4]}" fill-opacity=".75"/>`;
  }
  s += [[227,24,3,'#d55050'],[214,24,2.2,'#b14348'],[237,26,2,'#c3474b'],[138,25,2.5,'#7b4b52'],[233,30,2,'#9c4248']].map(([x, y, r, c]) => dot(x, y, r, c, .8)).join('');
  put('painter', s);
}
```
